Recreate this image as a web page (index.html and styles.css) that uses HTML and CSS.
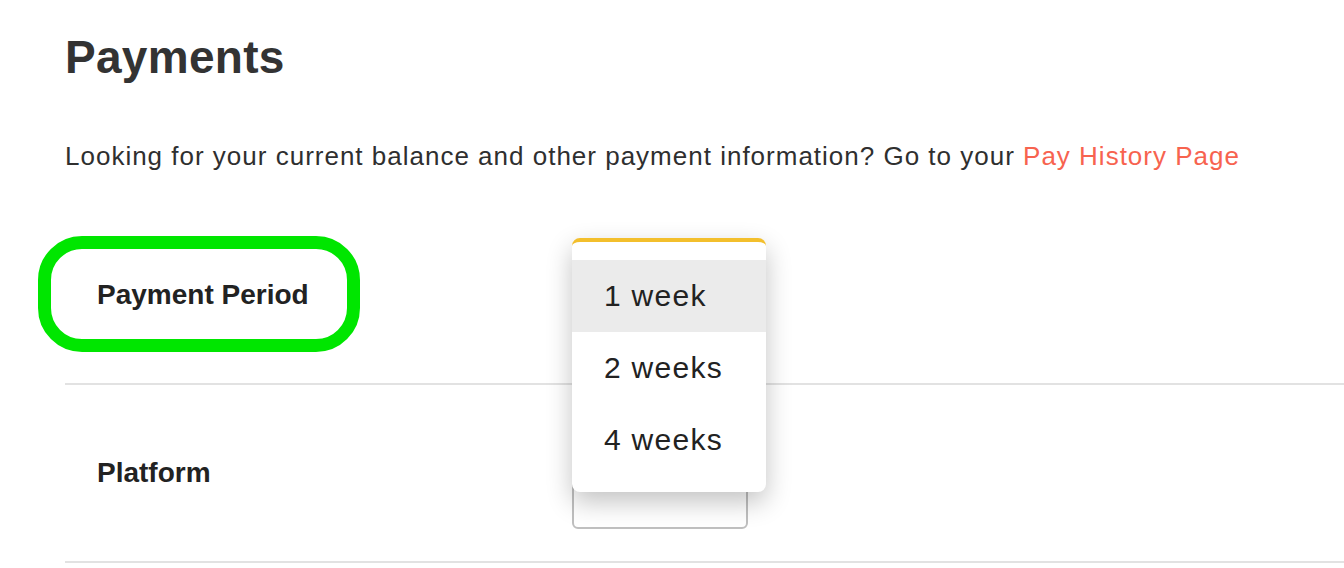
FILE: index.html
```html
<!DOCTYPE html>
<html lang="en">
<head>
<meta charset="utf-8">
<title>Payments</title>
<link rel="stylesheet" href="styles.css">
</head>
<body>
<main class="page">
  <h1 class="title">Payments</h1>
  <p class="intro">Looking for your current balance and other payment information? Go to your <a class="link" href="#">Pay History Page</a></p>
  <section class="settings">
    <div class="row">
      <div class="label-cell"><span class="label label--highlight">Payment Period</span></div>
      <div class="control-cell">
        <div class="select"></div>
        <ul class="dropdown">
          <li class="option option--active">1 week</li>
          <li class="option">2 weeks</li>
          <li class="option">4 weeks</li>
        </ul>
      </div>
    </div>
    <div class="row">
      <div class="label-cell"><span class="label">Platform</span></div>
      <div class="control-cell">
        <div class="select select--tall"></div>
      </div>
    </div>
  </section>
</main>
</body>
</html>
```

FILE: styles.css
```css
* { box-sizing: border-box; }
html, body { margin: 0; padding: 0; background: #fff; }
body {
  font-family: "Liberation Sans", Arial, Helvetica, sans-serif;
  color: #333;
}
.page {
  padding: 29px 0 0 65px;
  overflow: hidden;
  height: 568px;
}
.title {
  margin: 0;
  font-size: 46px;
  line-height: 56px;
  font-weight: 700;
  color: #333;
  letter-spacing: 0.3px;
}
.intro {
  margin: 53px 0 0;
  font-size: 26px;
  line-height: 36px;
  letter-spacing: 1px;
  color: #2f2f2f;
}
.link {
  color: #f7634f;
  text-decoration: none;
}
.settings {
  margin-top: 33px;
}
.row {
  display: flex;
  align-items: center;
  height: 178px;
  border-bottom: 2px solid #e2e2e2;
}
.label-cell {
  width: 507px;
  padding-left: 32px;
  flex: none;
}
.label {
  position: relative;
  display: inline-block;
  font-size: 28px;
  line-height: 32px;
  font-weight: 700;
  color: #222;
}
.label--highlight::after {
  content: "";
  position: absolute;
  left: -59px;
  right: -51px;
  top: -43px;
  bottom: -41px;
  border: 13px solid #00e600;
  border-radius: 44px;
}
.control-cell {
  position: relative;
  flex: 1;
  align-self: stretch;
  display: flex;
  align-items: center;
}
.select {
  width: 176px;
  height: 56px;
  border: 2px solid #bfbfbf;
  border-radius: 6px;
  background: #fff;
}
.select--tall {
  height: 110px;
  margin-top: 2px;
}
.dropdown {
  position: absolute;
  left: 0;
  top: 31px;
  width: 194px;
  margin: 0;
  padding: 18px 0 16px;
  list-style: none;
  background: #fff;
  border-top: 4px solid #f3bf2c;
  border-radius: 8px;
  box-shadow: 0 10px 26px rgba(0, 0, 0, 0.24);
  z-index: 2;
}
.option {
  height: 72px;
  padding-left: 32px;
  display: flex;
  align-items: center;
  font-size: 30px;
  letter-spacing: 1.3px;
  color: #222;
}
.option--active {
  background: #ebebeb;
}
```
